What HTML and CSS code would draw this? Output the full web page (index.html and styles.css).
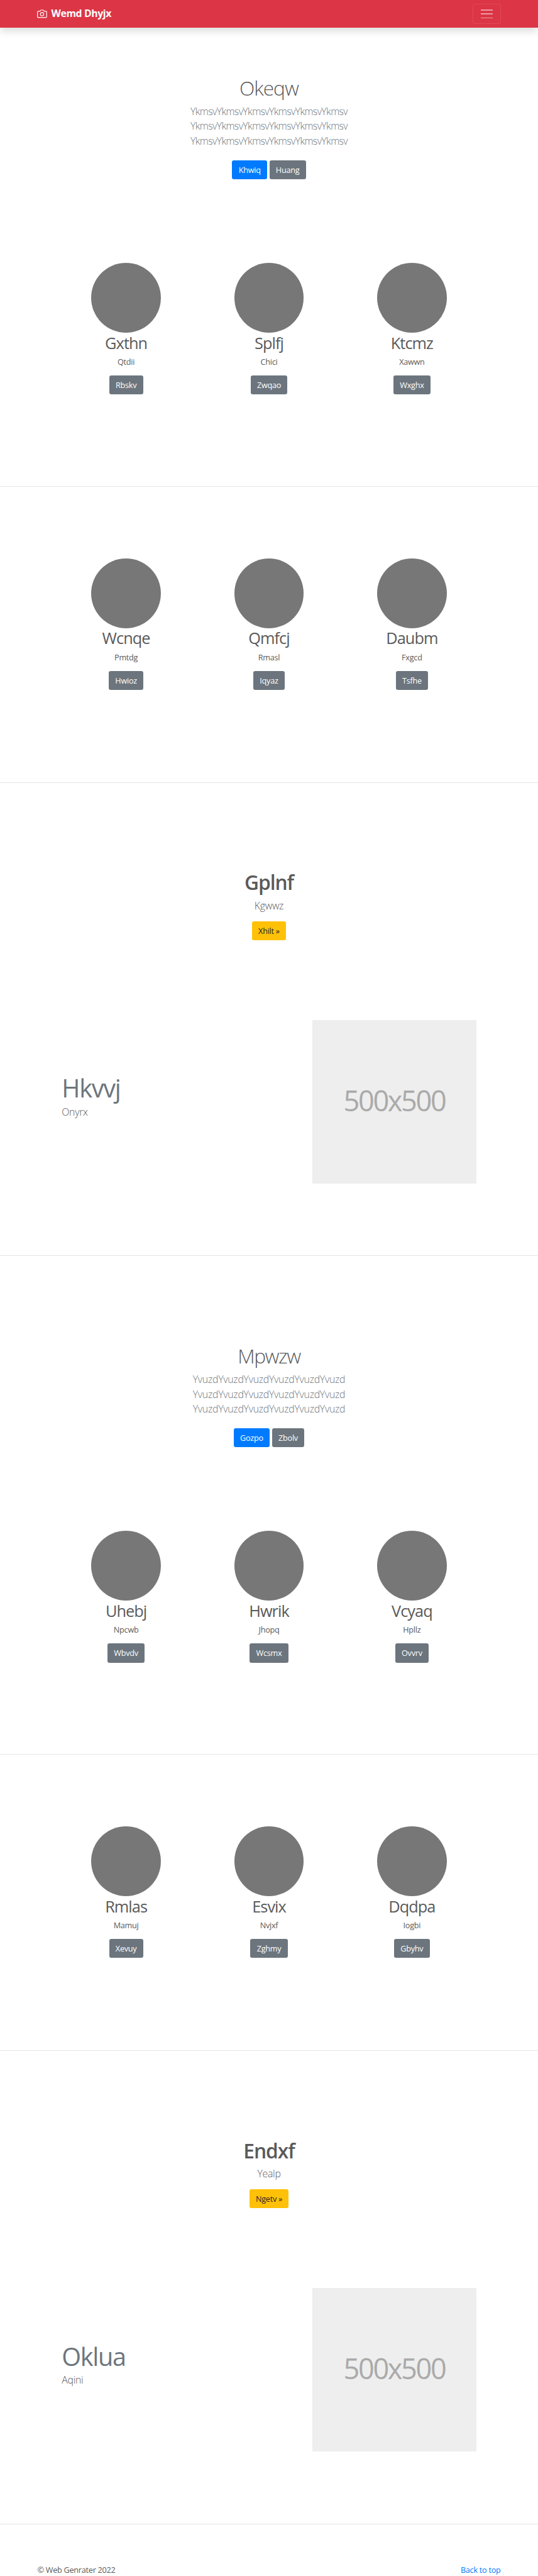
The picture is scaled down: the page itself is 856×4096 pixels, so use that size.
FILE: index.html
```html
<!DOCTYPE html>
<html lang="en">
<head>
<meta charset="utf-8">
<title>Wemd Dhyjx</title>
<link rel="stylesheet" href="styles.css">
</head>
<body>
<header class="navbar">
  <a class="brand"><svg class="brand-icon" viewBox="0 0 24 24" fill="none" stroke="currentColor" stroke-width="1.8" stroke-linecap="round" stroke-linejoin="round"><path d="M23 19a2 2 0 0 1-2 2H3a2 2 0 0 1-2-2V8a2 2 0 0 1 2-2h4l2-3h6l2 3h4a2 2 0 0 1 2 2z"/><circle cx="12" cy="13" r="4"/></svg><strong>Wemd Dhyjx</strong></a>
  <button class="toggler" aria-label="Menu"><span class="bar"></span><span class="bar"></span><span class="bar"></span></button>
</header>
<main>
  <section class="hero first">
    <h1 class="hero-title">Okeqw</h1>
    <p class="lead hero-text">YkmsvYkmsvYkmsvYkmsvYkmsvYkmsv<br>YkmsvYkmsvYkmsvYkmsvYkmsvYkmsv<br>YkmsvYkmsvYkmsvYkmsvYkmsvYkmsv</p>
    <div class="actions"><a class="btn primary">Khwiq</a><a class="btn">Huang</a></div>
  </section>
  <section class="cards">
    <div class="card"><div class="avatar"></div><h2>Gxthn</h2><p>Qtdii</p><a class="btn">Rbskv</a></div>
    <div class="card"><div class="avatar"></div><h2>Splfj</h2><p>Chici</p><a class="btn">Zwqao</a></div>
    <div class="card"><div class="avatar"></div><h2>Ktcmz</h2><p>Xawwn</p><a class="btn">Wxghx</a></div>
  </section>
  <hr>
  <section class="cards later">
    <div class="card"><div class="avatar"></div><h2>Wcnqe</h2><p>Pmtdg</p><a class="btn">Hwioz</a></div>
    <div class="card"><div class="avatar"></div><h2>Qmfcj</h2><p>Rmasl</p><a class="btn">Iqyaz</a></div>
    <div class="card"><div class="avatar"></div><h2>Daubm</h2><p>Fxgcd</p><a class="btn">Tsfhe</a></div>
  </section>
  <hr>
  <section class="callout">
    <h1 class="callout-title">Gplnf</h1>
    <p class="lead">Kgwwz</p>
    <a class="btn warning">Xhilt »</a>
  </section>
  <section class="feature">
    <div class="feature-text"><h2>Hkvvj</h2><p class="lead">Onyrx</p></div>
    <div class="placeholder">500x500</div>
  </section>
  <hr>
  <section class="hero second">
    <h1 class="hero-title">Mpwzw</h1>
    <p class="lead hero-text">YvuzdYvuzdYvuzdYvuzdYvuzdYvuzd<br>YvuzdYvuzdYvuzdYvuzdYvuzdYvuzd<br>YvuzdYvuzdYvuzdYvuzdYvuzdYvuzd</p>
    <div class="actions"><a class="btn primary">Gozpo</a><a class="btn">Zbolv</a></div>
  </section>
  <section class="cards">
    <div class="card"><div class="avatar"></div><h2>Uhebj</h2><p>Npcwb</p><a class="btn">Wbvdv</a></div>
    <div class="card"><div class="avatar"></div><h2>Hwrik</h2><p>Jhopq</p><a class="btn">Wcsmx</a></div>
    <div class="card"><div class="avatar"></div><h2>Vcyaq</h2><p>Hpllz</p><a class="btn">Ovvrv</a></div>
  </section>
  <hr>
  <section class="cards later">
    <div class="card"><div class="avatar"></div><h2>Rmlas</h2><p>Mamuj</p><a class="btn">Xevuy</a></div>
    <div class="card"><div class="avatar"></div><h2>Esvix</h2><p>Nvjxf</p><a class="btn">Zghmy</a></div>
    <div class="card"><div class="avatar"></div><h2>Dqdpa</h2><p>Iogbi</p><a class="btn">Gbyhv</a></div>
  </section>
  <hr>
  <section class="callout">
    <h1 class="callout-title">Endxf</h1>
    <p class="lead">Yealp</p>
    <a class="btn warning">Ngetv »</a>
  </section>
  <section class="feature">
    <div class="feature-text"><h2>Oklua</h2><p class="lead">Aqini</p></div>
    <div class="placeholder">500x500</div>
  </section>
  <hr>
</main>
<footer class="footer"><p>© Web Genrater 2022</p><a>Back to top</a></footer>
</body>
</html>
```
FILE: styles.css
```css
* { box-sizing: border-box; }
html { font-size: 7.9225px; }
body {
  margin: 0;
  background: #fff;
  color: #5a5a5a;
  font: 400 1.6rem/1.5 "Open Sans", "Noto Sans", sans-serif;
  letter-spacing: -.02em;
}
h1, h2, p { margin: 0; }

.navbar {
  height: 5.6rem;
  padding: 0 7.5rem;
  display: flex;
  align-items: center;
  justify-content: space-between;
  background: #dc3545;
  box-shadow: 0 .8rem 1.6rem rgba(0, 0, 0, .15);
}
.brand {
  display: flex;
  align-items: center;
  gap: .8rem;
  color: #fff;
  font-size: 2rem;
  letter-spacing: -.05rem;
}
.brand-icon { width: 2rem; height: 2rem; }
.toggler {
  width: 5.6rem;
  height: 4rem;
  padding: 0;
  display: flex;
  flex-direction: column;
  align-items: center;
  justify-content: center;
  gap: .6rem;
  background: none;
  border: 1px solid rgba(255, 255, 255, .1);
  border-radius: .4rem;
}
.bar { width: 2.4rem; height: .2rem; background: rgba(255, 255, 255, .5); }

hr {
  height: 1px;
  margin: 0 0 calc(.1rem - 1px);
  border: 0;
  background: #e5e5e5;
}

.btn {
  display: inline-block;
  height: 3.8rem;
  padding: 0 1.3rem;
  border-radius: .4rem;
  background: #6c757d;
  color: #fff;
  line-height: 3.8rem;
  white-space: nowrap;
  vertical-align: top;
}
.primary { background: #007bff; }
.warning { background: #ffc107; color: #212529; }

.lead { font-size: 2rem; font-weight: 300; line-height: 3rem; }

.hero { padding: 9.7rem 0 16.8rem; text-align: center; }
.second { padding-top: 17.7rem; }
.hero-title { font-size: 4rem; font-weight: 300; line-height: 4.8rem; letter-spacing: -.12rem; }
.second .hero-title { letter-spacing: -.18rem; }
.hero-text { margin: .8rem 0 2.3rem; color: #6c757d; }
.first .hero-text { letter-spacing: -.075rem; }
.actions { display: flex; justify-content: center; gap: .45rem; }

.cards {
  height: 44.8rem;
  padding: 0 11rem;
  display: grid;
  grid-template-columns: repeat(3, 28.7rem);
  justify-content: center;
  text-align: center;
}
.later { height: 59.3rem; padding-top: 14.4rem; }
.avatar { width: 14rem; height: 14rem; margin: 0 auto; border-radius: 50%; background: #777; }
.card h2 { padding-top: .06rem; font-size: 3.2rem; font-weight: 400; line-height: 3.84rem; letter-spacing: -.12rem; }
.card p { margin: .75rem 0 1.55rem; line-height: 2.4rem; }

.callout { padding: 17.66rem 0 16rem; text-align: center; }
.callout-title { font-size: 4rem; font-weight: 600; line-height: 4.8rem; letter-spacing: -.13rem; }
.callout .lead { margin: .82rem 0 1.52rem; }
.callout .btn { display: block; width: fit-content; margin: 0 auto; }

.feature {
  height: 47.3rem;
  padding: 0 12.4rem;
  display: flex;
  align-items: flex-start;
  justify-content: space-between;
}
.feature-text { padding-top: 11.33rem; }
.feature h2 { color: #6c757d; font-size: 5rem; font-weight: 400; line-height: 5rem; letter-spacing: -.16rem; }
.feature .lead { margin-top: .76rem; }
.placeholder {
  width: 32.9rem;
  height: 32.9rem;
  background: #eee;
  color: #aaa;
  font-size: 5.7rem;
  line-height: 32.4rem;
  letter-spacing: -.3rem;
  text-align: center;
}

.footer {
  height: 10.4rem;
  padding: 7.98rem 7.5rem 0;
  display: flex;
  justify-content: space-between;
  line-height: 2.4rem;
}
.footer a { color: #007bff; }
```
